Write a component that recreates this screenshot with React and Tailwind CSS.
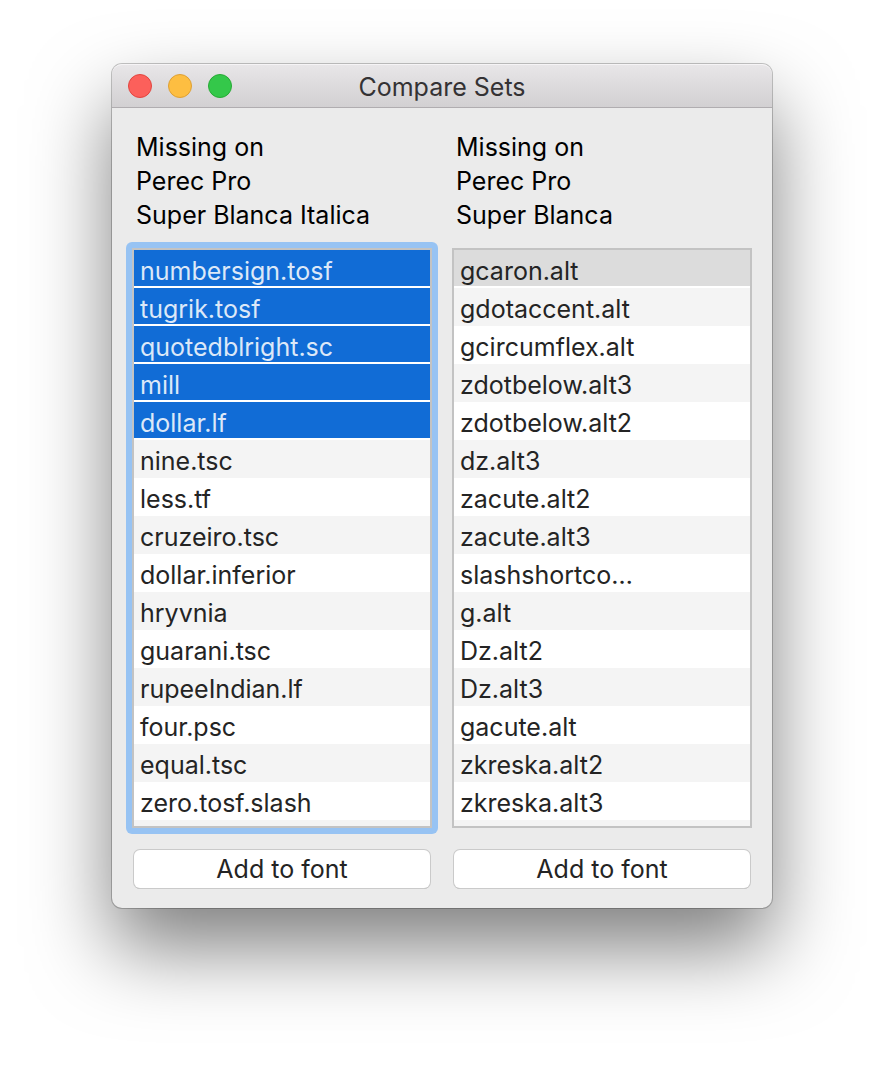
import { useState } from 'react';

const SETS = [
  {
    id: 'italica',
    font: 'Perec Pro',
    style: 'Super Blanca Italica',
    focused: true,
    selected: [0, 1, 2, 3, 4],
    glyphs: [
      'numbersign.tosf', 'tugrik.tosf', 'quotedblright.sc', 'mill', 'dollar.lf',
      'nine.tsc', 'less.tf', 'cruzeiro.tsc', 'dollar.inferior', 'hryvnia',
      'guarani.tsc', 'rupeeIndian.lf', 'four.psc', 'equal.tsc', 'zero.tosf.slash',
    ],
  },
  {
    id: 'blanca',
    font: 'Perec Pro',
    style: 'Super Blanca',
    focused: false,
    selected: [0],
    glyphs: [
      'gcaron.alt', 'gdotaccent.alt', 'gcircumflex.alt', 'zdotbelow.alt3', 'zdotbelow.alt2',
      'dz.alt3', 'zacute.alt2', 'zacute.alt3', 'slashshortco…', 'g.alt',
      'Dz.alt2', 'Dz.alt3', 'gacute.alt', 'zkreska.alt2', 'zkreska.alt3',
    ],
  },
];

function TrafficLights() {
  return (
    <div className="flex gap-4">
      <button type="button" aria-label="Close" className="size-6 rounded-full border border-[#e2453f] bg-[#fc605b]" />
      <button type="button" aria-label="Minimize" className="size-6 rounded-full border border-[#dea034] bg-[#fdbe41]" />
      <button type="button" aria-label="Zoom" className="size-6 rounded-full border border-[#27aa35] bg-[#34c84a]" />
    </div>
  );
}

function rowColor(isSelected, focused, index) {
  if (isSelected) {
    return focused
      ? 'border-b-2 border-white bg-[#116cd6] text-[#dce8f8]'
      : 'border-b-2 border-white bg-[#dcdcdc] text-[#242424]';
  }
  return index % 2 ? 'bg-[#f4f4f4] text-[#242424]' : 'bg-white text-[#242424]';
}

function GlyphColumn({ set }) {
  const [selected, setSelected] = useState(set.selected);
  const toggle = (i) =>
    setSelected((s) => (s.includes(i) ? s.filter((n) => n !== i) : [...s, i]));

  return (
    <section className="flex min-w-0 flex-1 flex-col">
      <h2 id={set.id} className="px-1 leading-[34px] text-black">
        Missing on
        <br />
        {set.font}
        <br />
        {set.style}
      </h2>
      <div className={`mt-2.5 -mx-1.5 rounded-md p-1.5 ${set.focused ? 'bg-[#97c3f3]' : ''}`}>
        <ul
          role="listbox"
          aria-multiselectable="true"
          aria-labelledby={set.id}
          className="border-2 border-[#c3c3c3] bg-white"
        >
          {set.glyphs.map((glyph, i) => (
            <li
              key={glyph}
              role="option"
              aria-selected={selected.includes(i)}
              onClick={() => toggle(i)}
              className={`h-[38px] cursor-default truncate px-1.5 pt-1 leading-[34px] ${rowColor(
                selected.includes(i),
                set.focused,
                i,
              )}`}
            >
              {glyph}
            </li>
          ))}
          <li role="presentation" className="h-1.5 bg-[#f4f4f4]" />
        </ul>
      </div>
      <button
        type="button"
        className="mx-0.5 mt-4 h-[38px] rounded-md bg-white leading-[34px] text-[#242424] shadow-[0_0_0_1px_#cacaca,0_1px_0_0_#b0b0b0]"
      >
        Add to font
      </button>
    </section>
  );
}

export default function App() {
  return (
    <main className="min-h-screen bg-white px-28 pt-16 pb-40 font-['Inter','Liberation_Sans',sans-serif] text-[25px]">
      <div className="rounded-[10px] bg-[#ebebeb] shadow-[0_0_0_1px_rgba(0,0,0,0.22),0_40px_80px_rgba(0,0,0,0.5)]">
        <header className="grid h-11 grid-cols-[1fr_auto_1fr] items-center rounded-t-[10px] border-t border-b border-t-[#f6f4f6] border-b-[#b0adb0] bg-linear-to-b from-[#e8e6e8] to-[#d2d0d2] px-4">
          <TrafficLights />
          <h1 className="pt-0.5 leading-8 text-[#343234]">Compare Sets</h1>
        </header>
        <div className="flex gap-5 px-5 pt-[22px] pb-5">
          {SETS.map((set) => (
            <GlyphColumn key={set.id} set={set} />
          ))}
        </div>
      </div>
    </main>
  );
}
